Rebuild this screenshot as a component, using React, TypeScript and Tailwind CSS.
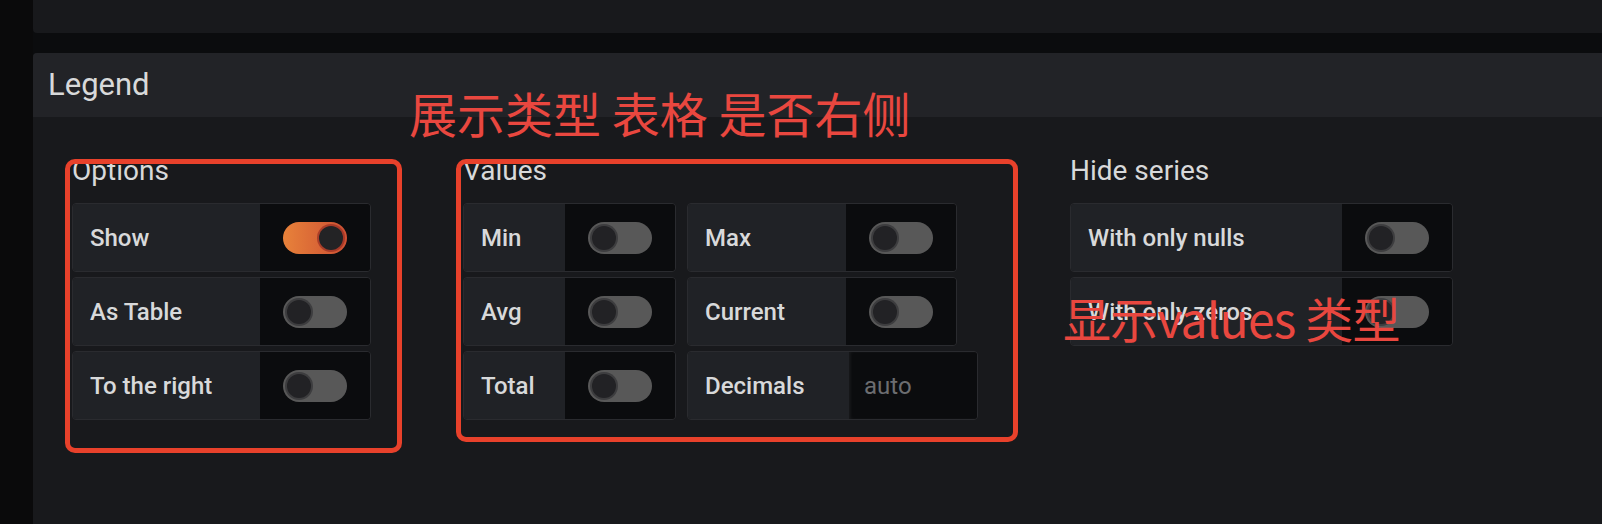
import { FC, ReactNode } from "react";

const Switch: FC<{ on?: boolean }> = ({ on }) => (
    <div
        className={
            on
                ? "relative h-[32px] w-[64px] rounded-full bg-[linear-gradient(90deg,#e8823a,#cd4f33)]"
                : "relative h-[32px] w-[64px] rounded-full bg-[#585858]"
        }
    >
        <div
            className={
                on
                    ? "absolute right-[4px] top-[4px] h-[24px] w-[24px] rounded-full bg-[#232325] shadow-[0_0_0_2px_rgba(150,45,35,0.7)]"
                    : "absolute left-[4px] top-[4px] h-[24px] w-[24px] rounded-full bg-[#222225] shadow-[0_0_0_2px_#3d3d3f]"
            }
        />
    </div>
);

const Row: FC<{ label: string; labelClass: string; children: ReactNode; controlClass?: string }> = ({
    label,
    labelClass,
    children,
    controlClass = "w-[110px] justify-center",
}) => (
    <div className="flex h-[69px] overflow-hidden rounded-[4px] border border-[#2a2b2f]">
        <div className={`flex items-center bg-[#202226] pl-[17px] text-[24px] font-medium text-[#d8d9da] ${labelClass}`}>
            {label}
        </div>
        <div className={`flex items-center bg-[#0b0c0e] ${controlClass}`}>{children}</div>
    </div>
);

const Title: FC<{ children: ReactNode }> = ({ children }) => (
    <div className="mb-[16px] text-[28px] leading-[32px] text-[#d8d9da]">{children}</div>
);

export default function App() {
    return (
        <div
            className="flex h-[524px] w-[1602px] overflow-hidden bg-[#0b0c0e]"
            style={{ fontFamily: "Roboto, 'Noto Sans CJK SC', sans-serif" }}
        >
            <div className="w-[33px] shrink-0 bg-[#0a0a0b]" />
            <div className="flex flex-1 flex-col">
                <div className="h-[33px] rounded-bl-[4px] bg-[#18191c]" />
                <div className="relative mt-[20px] flex-1 rounded-tl-[4px] bg-[#18191c]">
                    <div className="flex h-[64px] items-center rounded-tl-[4px] bg-[#222327] pl-[15px] text-[31px] text-[#d8d9da]">
                        Legend
                    </div>
                    <div className="flex gap-[92px] pl-[39px] pt-[38px]">
                        <div>
                            <Title>Options</Title>
                            <div className="flex flex-col gap-[5px]">
                                <Row label="Show" labelClass="w-[187px]">
                                    <Switch on />
                                </Row>
                                <Row label="As Table" labelClass="w-[187px]">
                                    <Switch />
                                </Row>
                                <Row label="To the right" labelClass="w-[187px]">
                                    <Switch />
                                </Row>
                            </div>
                        </div>
                        <div>
                            <Title>Values</Title>
                            <div className="grid grid-cols-[213px_auto] items-start justify-items-start gap-x-[11px] gap-y-[5px]">
                                <Row label="Min" labelClass="w-[101px]">
                                    <Switch />
                                </Row>
                                <Row label="Max" labelClass="w-[158px]">
                                    <Switch />
                                </Row>
                                <Row label="Avg" labelClass="w-[101px]">
                                    <Switch />
                                </Row>
                                <Row label="Current" labelClass="w-[158px]">
                                    <Switch />
                                </Row>
                                <Row label="Total" labelClass="w-[101px]">
                                    <Switch />
                                </Row>
                                <Row
                                    label="Decimals"
                                    labelClass="w-[161px]"
                                    controlClass="w-[128px] pl-[15px] shadow-[inset_2px_0_3px_rgba(255,255,255,0.05)]"
                                >
                                    <span className="text-[24px] text-[#6c6d70]">auto</span>
                                </Row>
                            </div>
                        </div>
                        <div>
                            <Title>Hide series</Title>
                            <div className="flex flex-col gap-[5px]">
                                <Row label="With only nulls" labelClass="w-[271px]">
                                    <Switch />
                                </Row>
                                <Row label="With only zeros" labelClass="w-[271px]">
                                    <Switch />
                                </Row>
                            </div>
                        </div>
                    </div>

                    {/* annotations */}
                    <div className="pointer-events-none absolute left-[32px] top-[106px] h-[294px] w-[337px] rounded-[10px] border-[5px] border-[#e8412b]" />
                    <div className="pointer-events-none absolute left-[423px] top-[106px] h-[283px] w-[562px] rounded-[10px] border-[5px] border-[#e8412b]" />
                    <div
                        className="absolute left-[376px] top-[29px] whitespace-pre text-[48px] leading-[60px] text-[#e9473f]"
                        style={{ fontFamily: "'Noto Sans CJK SC', sans-serif" }}
                    >
                        展示类型 表格 是否右侧
                    </div>
                    <div
                        className="absolute left-[1030px] top-[234px] whitespace-pre text-[48px] leading-[60px] tracking-[-0.8px] text-[#e9473f]"
                        style={{ fontFamily: "'Noto Sans CJK SC', sans-serif" }}
                    >
                        显示values 类型
                    </div>
                </div>
            </div>
        </div>
    );
}
